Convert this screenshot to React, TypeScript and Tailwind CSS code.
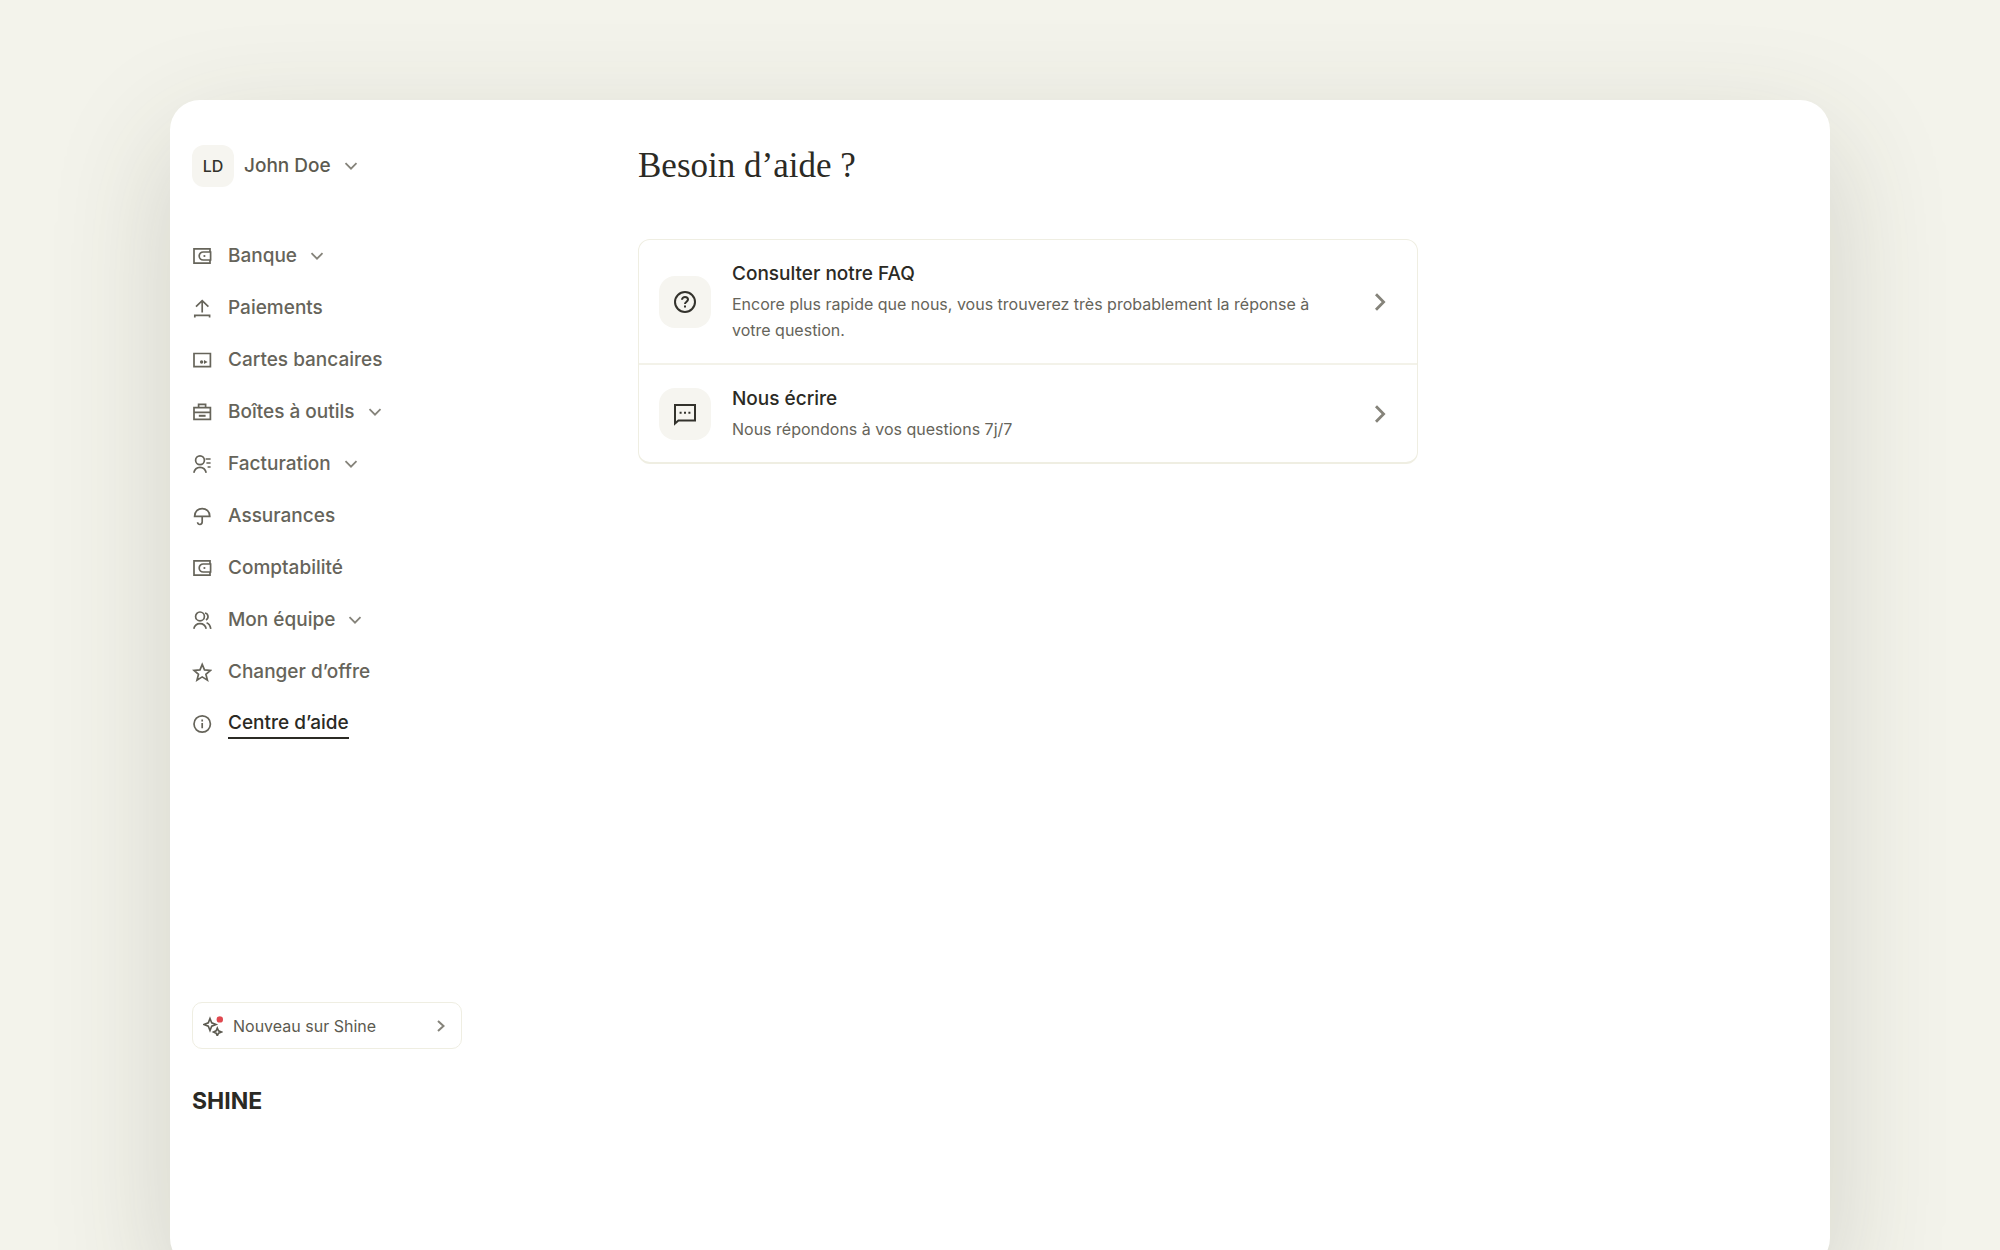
import type { ReactNode } from "react";

type NavItem = {
  label: string;
  icon: ReactNode;
  expandable?: boolean;
  active?: boolean;
};

function Icon({ children }: { children: ReactNode }) {
  return (
    <svg
      viewBox="0 0 20 20"
      className="size-5 shrink-0"
      fill="none"
      stroke="currentColor"
      strokeWidth="1.7"
      aria-hidden="true"
    >
      {children}
    </svg>
  );
}

const wallet = (
  <Icon>
    <path d="M18 6V2.8H2v14.4h16V14" />
    <path d="M18.6 6v8h-7.4a4 4 0 0 1 0-8z" />
    <circle cx="12.4" cy="10" r="1.1" fill="currentColor" stroke="none" />
  </Icon>
);

const navItems: NavItem[] = [
  { label: "Banque", icon: wallet, expandable: true },
  {
    label: "Paiements",
    icon: (
      <Icon>
        <path d="M10.2 14.4V2.4M4 8.6l6.2-6 6.2 6M2.8 19.4v-2h14.8v2" />
      </Icon>
    ),
  },
  {
    label: "Cartes bancaires",
    icon: (
      <Icon>
        <path d="M2 3.5h16.4v13.2H2z" />
        <circle cx="9.6" cy="12" r="1.7" fill="currentColor" stroke="none" />
        <path d="M12 9.9l3.6 2.1-3.6 2.1z" fill="currentColor" stroke="none" />
      </Icon>
    ),
  },
  {
    label: "Boîtes à outils",
    icon: (
      <Icon>
        <path d="M2 5.6h16.4v11.8H2zM6.6 5.6V2.4h7v3.2M2 10.4h16.4" />
        <path d="M6.8 13.8h6.8" strokeWidth="2" />
      </Icon>
    ),
    expandable: true,
  },
  {
    label: "Facturation",
    icon: (
      <Icon>
        <circle cx="8" cy="6.2" r="4.4" />
        <path d="M1.8 18.8c.8-3.6 3-5.4 6.2-5.4s5.4 1.8 6.2 5.4" />
        <path d="M13.6 5h5M14.4 9h4.2M15.6 13h3" />
      </Icon>
    ),
    expandable: true,
  },
  {
    label: "Assurances",
    icon: (
      <Icon>
        <path d="M2.6 10.4c0-4.8 3.4-7.8 7.6-7.8s7.6 3 7.6 7.8z" />
        <path d="M10.2 10.4v5.4c0 3.6-4.6 3.4-4.6.4" />
      </Icon>
    ),
  },
  { label: "Comptabilité", icon: wallet },
  {
    label: "Mon équipe",
    icon: (
      <Icon>
        <circle cx="8" cy="6.4" r="4.4" />
        <path d="M1.8 18.8c.8-3.4 3-5.2 6.2-5.2s5.4 1.8 6.2 5.2" />
        <path d="M13 3c3.6.8 4 5.2 1 7M14.6 12.8c2.2.8 3.6 2.8 4.2 6" />
      </Icon>
    ),
    expandable: true,
  },
  {
    label: "Changer d’offre",
    icon: (
      <Icon>
        <path d="M10.2 2.4l2.3 5.5 6 .5-4.6 3.9 1.5 5.8-5.2-3.2L5 18.1l1.5-5.8L2 8.4l6-.5z" />
      </Icon>
    ),
  },
  {
    label: "Centre d’aide",
    icon: (
      <Icon>
        <circle cx="10.2" cy="10" r="8.2" />
        <path d="M10.2 9v5.2M10.2 5.6v2" />
      </Icon>
    ),
    active: true,
  },
];

const helpItems = [
  {
    title: "Consulter notre FAQ",
    text: "Encore plus rapide que nous, vous trouverez très probablement la réponse à votre question.",
    icon: (
      <svg viewBox="0 0 24 24" className="size-6" fill="none" stroke="currentColor" strokeWidth="2" aria-hidden="true">
        <circle cx="12" cy="12" r="10" />
        <path d="M9 9.8c0-3.8 6-3.6 6-.2 0 2-3 2.2-3 4.4M12 15.4v2.2" />
      </svg>
    ),
  },
  {
    title: "Nous écrire",
    text: "Nous répondons à vos questions 7j/7",
    icon: (
      <svg viewBox="0 0 24 24" className="size-6" fill="none" stroke="currentColor" strokeWidth="2" aria-hidden="true">
        <path d="M2 21.5V3h20v15.4H5.4z" />
        <path d="M6.6 10.7h2M11 10.7h2M15.4 10.7h2" />
      </svg>
    ),
  },
];

function ChevronDown() {
  return (
    <svg
      viewBox="0 0 20 20"
      className="size-5 shrink-0"
      fill="none"
      stroke="#85837a"
      strokeWidth="1.8"
      aria-hidden="true"
    >
      <path d="M4.5 7.2l5.5 5.5 5.5-5.5" />
    </svg>
  );
}

function Sidebar() {
  return (
    <aside className="flex w-[270px] shrink-0 flex-col pt-[45px] pb-[151px]">
      <button type="button" className="flex items-center self-start text-[#5c5a50]">
        <span className="flex size-[42px] items-center justify-center rounded-xl bg-[#f6f5f0] text-base font-medium text-[#33322c]">
          LD
        </span>
        <span className="ml-[10px] text-[19px] leading-7 font-medium">John Doe</span>
        <span className="ml-[10px]">
          <ChevronDown />
        </span>
      </button>

      <nav className="mt-[43px]">
        <ul>
          {navItems.map((item) => (
            <li key={item.label}>
              <a href="#" className="flex h-[52px] items-center text-[#66645a]">
                {item.icon}
                <span
                  className={
                    item.active
                      ? "ml-4 border-b-2 border-[#2b2a24] text-[19px] leading-7 font-medium text-[#2b2a24]"
                      : "ml-4 text-[19px] leading-7 font-medium"
                  }
                >
                  {item.label}
                </span>
                {item.expandable && (
                  <span className="ml-[10px]">
                    <ChevronDown />
                  </span>
                )}
              </a>
            </li>
          ))}
        </ul>
      </nav>

      <div className="mt-auto">
        <button
          type="button"
          className="flex h-[47px] w-full items-center rounded-[10px] border border-[#efeee2] px-[10px] text-[#5c5a50]"
        >
          <svg viewBox="0 0 20 20" className="size-5 shrink-0" fill="none" aria-hidden="true">
            <path
              d="M7 2.5l1.7 4.3L13 8.5l-4.3 1.7L7 14.5l-1.7-4.3L1 8.5l4.3-1.7zM14.3 12l1.2 2.8 2.8 1.2-2.8 1.2-1.2 2.6-1.2-2.6-2.6-1.2 2.6-1.2z"
              stroke="currentColor"
              strokeWidth="1.6"
            />
            <circle cx="16.8" cy="3.4" r="3.2" fill="#e0484f" />
          </svg>
          <span className="ml-[10px] text-base">Nouveau sur Shine</span>
          <svg
            viewBox="0 0 20 20"
            className="ml-auto size-5"
            fill="none"
            stroke="#85837a"
            strokeWidth="2"
            aria-hidden="true"
          >
            <path d="M7 5l5.5 5L7 15" />
          </svg>
        </button>
        <p className="mt-9 text-[23px] leading-8 font-bold text-[#2b2a24]">SHINE</p>
      </div>
    </aside>
  );
}

function App() {
  return (
    <div className="h-screen overflow-hidden bg-[#f3f3eb] pt-[100px] font-['Inter',sans-serif]">
      <div className="mx-auto flex min-h-[calc(100vh-82px)] w-[83%] gap-44 rounded-[30px] bg-white px-[22px] shadow-[0_40px_120px_rgba(60,60,45,0.18)]">
        <Sidebar />
        <main className="max-w-[780px] flex-1 pt-[46px]">
          <h1 className="font-['Liberation_Serif',serif] text-[35px] leading-10 text-[#2b2a24]">
            Besoin d’aide ?
          </h1>
          <ul className="mt-[53px] rounded-xl border border-b-2 border-[#efeee2]">
            {helpItems.map((item) => (
              <li key={item.title} className="border-[#f3f2e9] not-last:border-b-2">
                <a href="#" className="flex items-center p-5">
                  <span className="flex size-[52px] shrink-0 items-center justify-center rounded-2xl bg-[#f6f5f0] text-[#33322c]">
                    {item.icon}
                  </span>
                  <span className="mr-10 ml-[21px] flex-1">
                    <span className="block text-[19px] leading-7 font-medium text-[#2b2a24]">{item.title}</span>
                    <span className="mt-[3px] block text-base leading-[26px] text-[#66645a]">{item.text}</span>
                  </span>
                  <svg
                    viewBox="0 0 20 20"
                    className="mr-[6px] size-5 shrink-0"
                    fill="none"
                    stroke="#85837a"
                    strokeWidth="2.8"
                    aria-hidden="true"
                  >
                    <path d="M5 2.2L12.6 10 5 17.8" />
                  </svg>
                </a>
              </li>
            ))}
          </ul>
        </main>
      </div>
    </div>
  );
}

export default App;
